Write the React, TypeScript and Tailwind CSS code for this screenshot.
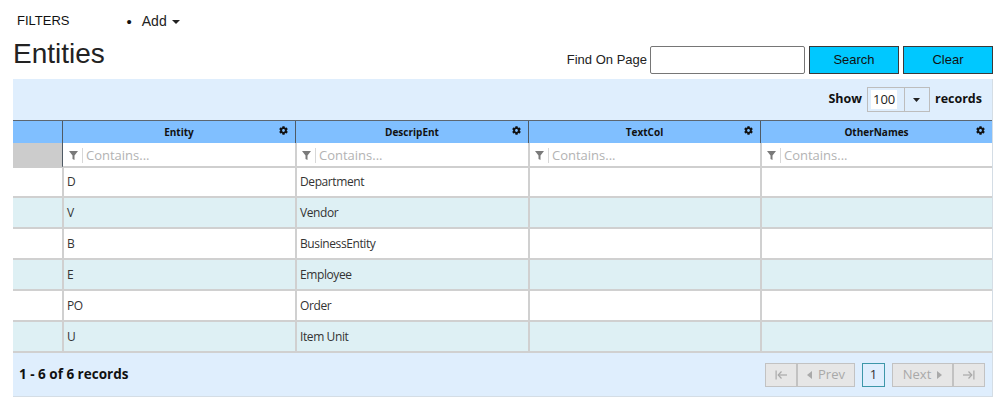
import React from "react";
import { FaCog } from "react-icons/fa";

const rows = [
  ["D", "Department"],
  ["V", "Vendor"],
  ["B", "BusinessEntity"],
  ["E", "Employee"],
  ["PO", "Order"],
  ["U", "Item Unit"],
];

const cols = ["Entity", "DescripEnt", "TextCol", "OtherNames"];

function Funnel() {
  return (
    <svg width="9" height="9" viewBox="0 0 9 9">
      <polygon points="0,0 9,0 5.5,4.5 5.5,9 3.5,8 3.5,4.5" fill="#7a7a7a" />
    </svg>
  );
}

function PagerBtn({ children, w }: { children: React.ReactNode; w: string }) {
  return (
    <div
      className={`${w} h-[24px] flex items-center justify-center gap-[6px] bg-[#e6e6e6] border border-[#c2c2c2] text-[#a9a9a9] text-[13px]`}
    >
      {children}
    </div>
  );
}

export default function App() {
  return (
    <div className="w-[999px] h-[418px] bg-white overflow-hidden font-['Liberation_Sans',Arial,sans-serif] text-[#222]">
      <div className="ml-[13px] w-[980px]">
        {/* top nav */}
        <div className="h-[38px] pt-[4px] flex items-center">
          <span className="ml-[4px] text-[13px] text-[#111]">FILTERS</span>
          <span className="ml-[57px] text-[15px] leading-none text-[#111]">•</span>
          <span className="ml-[10px] text-[14px] text-[#222]">Add</span>
          <svg className="ml-[5px] mt-[2px]" width="8" height="4" viewBox="0 0 8 4">
            <polygon points="0,0 8,0 4,4" fill="#222" />
          </svg>
        </div>

        {/* heading row */}
        <div className="h-[41px] flex items-start justify-between">
          <h1 className="text-[28px] leading-[32px] text-[#222] font-normal">Entities</h1>
          <div className="mt-[8px] flex items-center">
            <span className="text-[13px] text-[#222] mr-[3px]">Find On Page</span>
            <div className="w-[155px] h-[28px] border border-[#767676] rounded-[2px] bg-white" />
            <div className="ml-[4px] w-[90px] h-[28px] bg-[#00c8ff] border border-[#3a3a3a] flex items-center justify-center text-[13px] text-[#111]">
              Search
            </div>
            <div className="ml-[4px] w-[90px] h-[28px] bg-[#00c8ff] border border-[#3a3a3a] flex items-center justify-center text-[13px] text-[#111]">
              Clear
            </div>
          </div>
        </div>

        {/* grid container */}
        <div className="bg-[#dfeefd] border-r border-b border-[#d4dde5] font-['Open_Sans','Noto_Sans',sans-serif]">
          {/* toolbar */}
          <div className="h-[41px] flex items-center justify-end pr-[10px]">
            <span className="text-[12.5px] font-bold text-[#111]">Show</span>
            <div className="ml-[5px] w-[63px] h-[25px] border border-[#bdbdbd] flex items-stretch">
              <div className="w-[36px] flex items-center">
                <span className="ml-[3px] px-[2px] bg-white text-[13px] text-[#222] leading-[19px]">100</span>
              </div>
              <div className="flex-1 border-l border-[#bdbdbd] flex items-center justify-center">
                <svg width="7" height="4" viewBox="0 0 7 4">
                  <polygon points="0,0 7,0 3.5,4" fill="#222" />
                </svg>
              </div>
            </div>
            <span className="ml-[5px] text-[12.5px] font-bold text-[#111]">records</span>
          </div>

          {/* header */}
          <div className="grid grid-cols-[49px_233px_233px_232px_232px] h-[23px] bg-[#80bfff] border-t border-[#5c6670]">
            <div />
            {cols.map((c) => (
              <div
                key={c}
                className="relative border-l border-[#4f5a64] flex items-center justify-center text-[10px] font-bold text-[#111]"
              >
                {c}
                <FaCog className="absolute right-[7px] top-[5px]" size={9} color="#111" />
              </div>
            ))}
          </div>

          {/* filter row */}
          <div className="grid grid-cols-[49px_233px_233px_232px_232px] h-[24px]">
            <div className="bg-[#cccccc]" />
            {cols.map((c, i) => (
              <div
                key={c}
                className={`${i === 0 ? "border-l border-[#4f5a64]" : "border-l-2 border-[#d0d0d0]"} bg-white border-b-2 border-b-[#cfcfcf] pt-[3px] flex items-center`}
              >
                <span className={`${i === 0 ? "ml-[6px]" : "ml-[5px]"} flex items-center`}>
                  <Funnel />
                </span>
                <span className="ml-[4px] w-px h-[15px] bg-[#d8d8d8]" />
                <span className="ml-[3px] text-[13px] text-[#b3b3b3]">Contains...</span>
              </div>
            ))}
          </div>

          {/* data rows */}
          {rows.map((r, ri) => (
            <div
              key={ri}
              className={`grid grid-cols-[49px_233px_233px_232px_232px] h-[31px] border-b-2 border-[#d0d0d0] ${
                ri % 2 === 1 ? "bg-[#def0f4]" : "bg-white"
              }`}
            >
              <div />
              <div className="border-l-2 border-[#d0d0d0] flex items-center pl-[3px] text-[12px] tracking-[-0.4px] text-[#333]">
                {r[0]}
              </div>
              <div className="border-l-2 border-[#d0d0d0] flex items-center pl-[3px] text-[12px] tracking-[-0.4px] text-[#333]">
                {r[1]}
              </div>
              <div className="border-l-2 border-[#d0d0d0]" />
              <div className="border-l-2 border-[#d0d0d0]" />
            </div>
          ))}

          {/* footer */}
          <div className="h-[43px] flex items-center justify-between pl-[6px] pr-[7px]">
            <span className="text-[13.5px] font-bold text-[#111]">1 - 6 of 6 records</span>
            <div className="flex items-center">
              <PagerBtn w="w-[32px]">
                <svg width="12" height="10" viewBox="0 0 12 10">
                  <rect x="0.5" y="0.5" width="1.2" height="9" fill="#a9a9a9" />
                  <rect x="3" y="4.4" width="9" height="1.2" fill="#a9a9a9" />
                  <polyline points="6.5,1.5 3.2,5 6.5,8.5" fill="none" stroke="#a9a9a9" strokeWidth="1.2" />
                </svg>
              </PagerBtn>
              <PagerBtn w="w-[58px]">
                <svg width="5" height="8" viewBox="0 0 5 8">
                  <polygon points="5,0 5,8 0,4" fill="#a9a9a9" />
                </svg>
                <span>Prev</span>
              </PagerBtn>
              <div className="ml-[7px] w-[23px] h-[24px] border border-[#3d97a9] flex items-center justify-center text-[13px] text-[#333]">
                1
              </div>
              <PagerBtn w="w-[61px] ml-[7px]">
                <span>Next</span>
                <svg width="5" height="8" viewBox="0 0 5 8">
                  <polygon points="0,0 0,8 5,4" fill="#a9a9a9" />
                </svg>
              </PagerBtn>
              <PagerBtn w="w-[32px]">
                <svg width="12" height="10" viewBox="0 0 12 10">
                  <rect x="10.3" y="0.5" width="1.2" height="9" fill="#a9a9a9" />
                  <rect x="0" y="4.4" width="9" height="1.2" fill="#a9a9a9" />
                  <polyline points="5.5,1.5 8.8,5 5.5,8.5" fill="none" stroke="#a9a9a9" strokeWidth="1.2" />
                </svg>
              </PagerBtn>
            </div>
          </div>
        </div>
      </div>
    </div>
  );
}
